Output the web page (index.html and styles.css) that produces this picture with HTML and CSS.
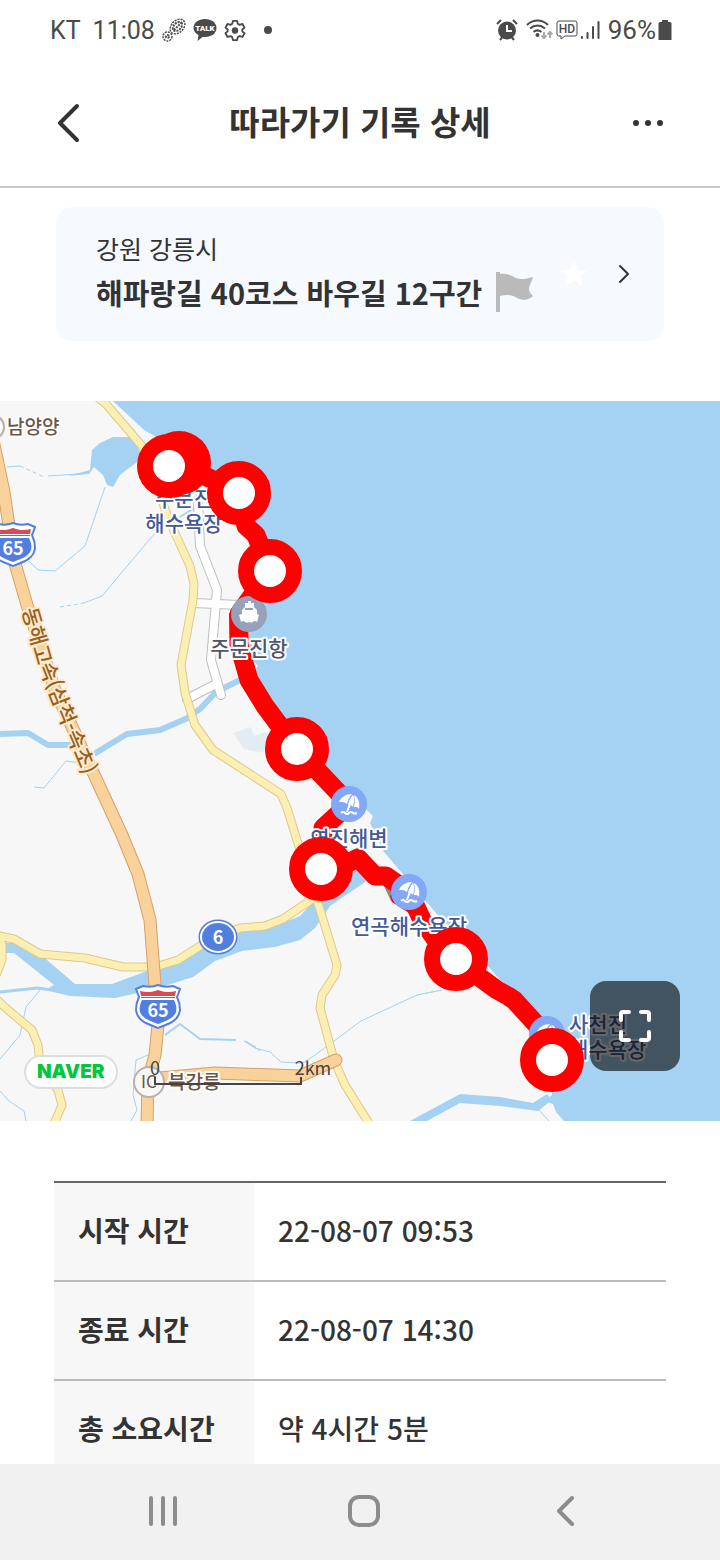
FILE: index.html
```html
<!DOCTYPE html>
<html lang="ko">
<head>
    <meta charset="UTF-8">
    <meta name="viewport" content="width=device-width, initial-scale=1.0">
    <title>따라가기 기록 상세</title>
    <link rel="stylesheet" href="styles.css">
</head>
<body>
    <!-- Status bar -->
    <div class="status-bar">
        <div class="status-left">
            <span class="carrier">KT</span>
            <span class="clock">11:08</span>
            <svg class="status-icon" width="24" height="24" viewBox="0 0 24 24" fill="none" stroke="#4a4a4a" stroke-dasharray="2 1">
                <ellipse cx="15.500" cy="8.500" rx="8.500" ry="6" transform="rotate(-45 15.500 8.500)" stroke-width="1.500"/>
                <ellipse cx="15.500" cy="8.500" rx="5.500" ry="3.500" transform="rotate(-45 15.500 8.500)" stroke-width="2"/>
                <path d="M12 12l7-7" stroke-width="2"/>
                <circle cx="5.500" cy="18.500" r="4.500" stroke-width="1.500"/>
                <circle cx="5.500" cy="18.500" r="1.500" stroke-width="2"/>
            </svg>
            <svg class="status-icon" width="24" height="24" viewBox="0 0 24 24">
                <path d="M12 1C5.500 1 .500 4.800.500 10c0 3 2 5.600 5 7.100L4.500 23l5.300-4.200c.7.100 1.400.200 2.200.200 6.500 0 11.500-3.800 11.500-9S18.500 1 12 1z" fill="#4a4a4a"/>
                <text class="talk" x="12" y="13" text-anchor="middle">TALK</text>
            </svg>
            <svg class="status-icon" width="22" height="24" viewBox="0 0 24 24" fill="none" stroke="#4a4a4a" stroke-width="2" stroke-linejoin="round">
                <path d="M9.700 2h4.600l.7 3.200 2 1.200 3.100-1 2.300 4-2.400 2.100v2l2.400 2.100-2.300 4-3.100-1-2 1.200-.7 3.200H9.700L9 19.800l-2-1.200-3.100 1-2.300-4L4 13.500v-2L1.600 9.400l2.300-4 3.100 1 2-1.200z"/>
                <circle cx="12" cy="12.500" r="3.500" fill="#4a4a4a" stroke="none"/>
            </svg>
            <span class="status-dot"></span>
        </div>
        <div class="status-right">
            <svg width="22" height="22" viewBox="0 0 22 22">
                <circle cx="11" cy="11.500" r="9" fill="#4a4a4a"/>
                <path d="M1 5l4-4M21 5l-4-4M4 21l2.500-3M18 21l-2.500-3" stroke="#4a4a4a" stroke-width="2"/>
                <path d="M11 6v6h5" fill="none" stroke="#fff" stroke-width="2"/>
            </svg>
            <svg class="wifi" width="28" height="22" viewBox="0 0 28 22" fill="none" stroke="#4a4a4a" stroke-width="2">
                <path d="M1 6c6-6 15-6 21 0M4 9.500c4.500-4 10.500-4 15 0M7.500 13c2.500-2 5.500-2 8 0"/>
                <circle cx="11.500" cy="16" r="2" fill="#4a4a4a" stroke="none"/>
                <path d="M18 13v6m-2.500-2.500L18 19l2.500-2.500M24 19v-6m-2.500 2.500L24 13l2.500 2.500" stroke="#aaa"/>
            </svg>
            <svg width="22" height="22" viewBox="0 0 22 22">
                <path d="M3 2h16a2 2 0 0 1 2 2v11a2 2 0 0 1-2 2H9l-4 3v-3H3a2 2 0 0 1-2-2V4a2 2 0 0 1 2-2z" fill="none" stroke="#4a4a4a"/>
                <text class="hd" x="11" y="14" text-anchor="middle">HD</text>
            </svg>
            <svg width="20" height="22" viewBox="0 0 20 22" stroke="#4a4a4a" stroke-width="2" stroke-linecap="round">
                <path d="M2 18v1M7.500 14v5M13 8v11M18.500 3v16"/>
            </svg>
            <span class="percent">96%</span>
            <svg width="14" height="22" viewBox="0 0 14 22">
                <path d="M4 1h6v2h2a1.500 1.500 0 0 1 1.500 1.500V21H.500V4.500A1.500 1.500 0 0 1 2 3h2z" fill="#4a4a4a"/>
            </svg>
        </div>
    </div>

    <header class="header">
        <button class="icon-button" type="button" aria-label="뒤로">
            <svg width="24" height="40" viewBox="0 0 24 40" fill="none" stroke="#333" stroke-width="4" stroke-linecap="round" stroke-linejoin="round">
                <path d="M21 3L4 20l17 17"/>
            </svg>
        </button>
        <h1 class="title">따라가기 기록 상세</h1>
        <button class="icon-button more" type="button" aria-label="더보기">
            <svg width="32" height="8" viewBox="0 0 32 8" fill="#333">
                <circle cx="4" cy="4" r="3"/>
                <circle cx="16" cy="4" r="3"/>
                <circle cx="28" cy="4" r="3"/>
            </svg>
        </button>
    </header>

    <main class="content">
        <a class="course" href="#course">
            <span class="course-text">
                <span class="region">강원 강릉시</span>
                <span class="course-name">
                    해파랑길 40코스 바우길 12구간
                    <svg class="flag" width="38" height="42" viewBox="0 0 38 42" fill="#bababa">
                        <path d="M0 1h4v40H0z"/>
                        <path d="M4 3c6-1 11 1 16 4 5 2 10 1 17-1-1 4-4 8-4 12 0 3 2 5 4 7-4 4-10 5-16 2-6-4-11-3-17-2z"/>
                    </svg>
                </span>
            </span>
            <svg class="star" width="28" height="28" viewBox="0 0 24 24" fill="#fff">
                <path d="M12 1l3.200 7.300 8 .7-6 5.300 1.800 7.700-7-4.100L5 22l1.800-7.700L.800 9l8-.700z"/>
            </svg>
            <svg width="12" height="20" viewBox="0 0 12 20" fill="none" stroke="#333" stroke-width="2" stroke-linecap="round" stroke-linejoin="round">
                <path d="M2 2l8 8-8 8"/>
            </svg>
        </a>

        <section class="map">
            <svg class="map-canvas" viewBox="0 401 720 720">
                <defs>
                    <symbol id="shield" viewBox="0 0 46 46">
                        <path d="M8 2c5 1 10 1 15-1 5 2 10 2 15 1l7 3c-1 3-2 6-3 8 2 4 3 8 3 13-1 10-9 13-22 18C10 39 2 36 1 26c0-5 1-9 3-13L1 5z" fill="#fff" stroke="#527fdf" stroke-width="2"/>
                        <path d="M7 16h32c2 4 3 8 2 12-2 6-10 9-18 12-8-3-16-6-18-12-1-4 0-8 2-12z" fill="#527fdf"/>
                        <path d="M6 13h34v1H6z" fill="#d84a54"/>
                        <path d="M5 7c7 2 13 1 18-1 5 2 11 3 18 1l-1 5H6z" fill="#d84a54"/>
                        <text class="road-number" x="23" y="33" text-anchor="middle">65</text>
                    </symbol>
                    <symbol id="beach" viewBox="0 0 36 36">
                        <circle cx="18" cy="18" r="18" fill="#82a8f7"/>
                        <path d="M8 16c2-5 7-8 13-8-3 3-4 6-5 10-2-2-5-2-8-2zM22 9c-3 3-4 6-5 10 2 0 4 0 5 2 1-4 2-8 0-12zM23 9c5 3 6 8 5 14-1-2-3-2-5-2 1-4 1-8 0-12z" fill="#fff"/>
                        <path d="M19 18l-3 8M10 27q2-2 4 0 2 2 4 0 2-2 4 0 2 1 4 0" fill="none" stroke="#fff" stroke-width="2"/>
                    </symbol>
                    <symbol id="point" viewBox="0 0 64 64">
                        <circle cx="32" cy="32" r="24" fill="#fff" stroke="#f00" stroke-width="16"/>
                    </symbol>
                    <path id="expressway-label" d="M22 610L36 659L57 713L86 782"/>
                </defs>

                <!-- Land and sea -->
                <rect y="401" width="720" height="720" fill="#f7f7f7"/>
                <path d="M113 401L130 417L144 430L160 439L205 485L240 520L262 575L250 620L248 655L258 666L252 674L262 700L297 749L345 795L368 811L373 816L370 823L384 852L408 880L440 918L470 945L500 980L520 996L548 1040L552 1095L545 1101L553 1104L556 1112L564 1121H720V401z" fill="#a5d2f3"/>
                <path d="M364 844L388 878M410 888L436 917" stroke="#f7f7f7" stroke-width="5"/>
                <path d="M233 733L251 727L254 736L265 732L280 738L273 751L258 752L244 749z" fill="#e4ecf3"/>

                <!-- Rivers -->
                <g fill="#a5d2f3">
                    <path d="M92 450L100 443L113 437L130 437L145 449L137 462L120 475L113 487L107 485L103 475L94 467L89 474L68 476L90 470z"/>
                    <path d="M4 943L15 942L40 954L75 984L112 984L150 970L200 950L235 931L285 922L300 916L314 901L356 870L375 862L368 880L330 906L315 928L300 940L275 947L242 951L215 961L193 977L155 989L115 998L70 996L45 990L54 985L14 953L4 953z"/>
                    <path d="M410 1121L460 1094L500 1097L533 1103L547 1094L552 1100L538 1111L500 1106L460 1103L427 1121z"/>
                </g>
                <g fill="none" stroke="#a5d2f3" stroke-linejoin="round">
                    <path d="M0 734L28 733L48 745L72 745M94 754L127 734L160 730L190 717" stroke-width="6"/>
                    <path d="M188 717L200 709L216 692L244 678" stroke-width="6"/>
                    <path d="M0 992L37 988L60 991" stroke-width="3"/>
                    <path d="M165 1035L180 1024L200 1039L236 1040M180 517L196 507" stroke-width="2"/>
                    <path d="M7 467L20 466M48 476L90 473M29 561L38 570L55 571L85 546L105 487M155 533L102 596L84 603M34 787L44 788L66 761L80 763M40 990L26 1007L20 1035L0 1059M0 1091L9 1101L24 1111L26 1121M148 1055L136 1060L133 1095L137 1110L131 1121M246 1041L260 1051M244 1041L256 1047M281 1062L300 1063L305 1062L322 1050L361 1021L417 995L442 990M281 1062L270 1052L255 1048L244 1041M538 1109L549 1121"/>
                </g>
                <path d="M20 466L44 477M60 607L84 603M417 995L442 990" stroke="#a5d2f3" stroke-dasharray="4 3"/>

                <!-- Local roads -->
                <g fill="none" stroke-linecap="round" stroke-linejoin="round">
                    <path d="M198 500L200 546L217 590L211 660L221 695M194 603L240 605M187 699L216 684" stroke="#bfbfbf" stroke-width="10"/>
                    <path d="M198 500L200 546L217 590L211 660L221 695M194 603L240 605M187 699L216 684" stroke="#fff" stroke-width="8"/>
                    <path d="M92 393L106 404L142 446L169 520L190 566L194 584L193 600L181 665L185 693L195 725L213 750L281 794L287 808L300 850L317 900L337 965L335 975L322 995L320 1008L334 1060L345 1085L370 1125M-5 935L14 939L40 954L85 958L123 967L155 967L178 960L205 943L240 928L265 926L283 919L314 898M-2 935L2 945L2 960L-4 975M-6 997L8 1010L32 1030L38 1045L40 1065L58 1090L62 1105L54 1124" stroke="#dfc88a" stroke-width="9"/>
                    <path d="M92 393L106 404L142 446L169 520L190 566L194 584L193 600L181 665L185 693L195 725L213 750L281 794L287 808L300 850L317 900L337 965L335 975L322 995L320 1008L334 1060L345 1085L370 1125M-5 935L14 939L40 954L85 958L123 967L155 967L178 960L205 943L240 928L265 926L283 919L314 898M-2 935L2 945L2 960L-4 975M-6 997L8 1010L32 1030L38 1045L40 1065L58 1090L62 1105L54 1124" stroke="#fcefb4" stroke-width="7"/>
                </g>

                <!-- Expressway -->
                <g fill="none" stroke-linecap="round" stroke-linejoin="round">
                    <path d="M-8 435L4 492L14 560L27 605L55 690L92 770L122 835L138 874L150 920L155 985L158 1025L155 1055L148 1080L147 1125M160 1078L215 1073L300 1076L336 1060" stroke="#d5a06c" stroke-width="13"/>
                    <path d="M-8 435L4 492L14 560L27 605L55 690L92 770L122 835L138 874L150 920L155 985L158 1025L155 1055L148 1080L147 1125M160 1078L215 1073L300 1076L336 1060" stroke="#f9d29b" stroke-width="11"/>
                </g>
                <text class="road-name"><textPath href="#expressway-label">동해고속(삼척-속초)</textPath></text>

                <use href="#shield" x="-10" y="522" width="46" height="46"/>
                <use href="#shield" x="135" y="984" width="46" height="46"/>
                <ellipse cx="218" cy="937" rx="18" ry="16" fill="#527fdf" stroke="#527fdf" stroke-width="3"/>
                <ellipse cx="218" cy="937" rx="17" ry="15" fill="#527fdf" stroke="#fff" stroke-width="2"/>
                <text class="road-number" x="218" y="944" text-anchor="middle">6</text>

                <circle cx="-8" cy="427" r="12" fill="#fff" stroke="#bbb0ac" stroke-width="2"/>
                <circle cx="149" cy="1082" r="15" fill="#f7f7f7" stroke="#bbb0ac" stroke-width="2"/>
                <text class="junction" x="149" y="1088" text-anchor="middle">IC</text>
                <text class="place town" x="7" y="434">남양양</text>
                <text class="place town" x="168" y="1089">북강릉</text>

                <!-- Walked route -->
                <path d="M384 886L391 901L404 910L400 890z" fill="#888"/>
                <path d="M179 463L239 493L246 526L256 535L270 571L239 614L239 645L249 680L265 706L297 749L335 789L349 804L323 828L321 869L344 865L358 858L375 876L386 876L409 892L422 920L434 937L456 959L482 979L497 990L508 996L514 1000L546 1035L552 1060" fill="none" stroke="#f00" stroke-width="19" stroke-linejoin="round"/>
                <path d="M229 613l12 6v28h-11zM390 895l30 5 8 25-36-23z" fill="#f00"/>

                <!-- Places -->
                <circle cx="249" cy="614" r="18" fill="#98a1bb"/>
                <path d="M245 607v-4h3v-2h3v2h3v4l3 3v4l2 1-2 7q-2-2-4 0-2 1-4 0-2 1-4 0-2-2-4 0l-2-7 3-1v-4z" fill="#fff"/>
                <path d="M245 609h8" stroke="#98a1bb" stroke-width="2"/>
                <use href="#beach" x="331" y="786" width="36" height="36"/>
                <use href="#beach" x="391" y="874" width="36" height="36"/>
                <use href="#beach" x="529" y="1016" width="36" height="36"/>
                <text class="place" x="184" y="506" text-anchor="middle">주문진</text>
                <text class="place" x="184" y="531" text-anchor="middle">해수욕장</text>
                <text class="place port" x="249" y="656" text-anchor="middle">주문진항</text>
                <text class="place" x="349" y="846" text-anchor="middle">연진해변</text>
                <text class="place" x="409" y="934" text-anchor="middle">연곡해수욕장</text>
                <text class="place" x="569" y="1032">사천진</text>
                <text class="place" x="569" y="1057">해수욕장</text>

                <!-- Checkpoints -->
                <circle cx="179" cy="463" r="32" fill="#f00"/>
                <use href="#point" x="137" y="434" width="64" height="64"/>
                <use href="#point" x="207" y="461" width="64" height="64"/>
                <use href="#point" x="238" y="539" width="64" height="64"/>
                <use href="#point" x="265" y="717" width="64" height="64"/>
                <use href="#point" x="289" y="837" width="64" height="64"/>
                <use href="#point" x="424" y="927" width="64" height="64"/>
                <use href="#point" x="520" y="1028" width="64" height="64"/>

                <!-- Scale -->
                <path d="M155 1077v7h146v-7" fill="none" stroke="#444" stroke-width="2"/>
                <text class="scale" x="155" y="1075" text-anchor="middle">0</text>
                <text class="scale" x="313" y="1075" text-anchor="middle">2km</text>
            </svg>
            <a class="naver" href="#naver">NAVER</a>
            <button class="expand" type="button" aria-label="지도 크게 보기">
                <svg width="34" height="34" viewBox="0 0 34 34" fill="none" stroke="#fff" stroke-width="4" stroke-linecap="round" stroke-linejoin="round">
                    <path d="M3 11V5q0-2 2-2h6M23 3h6q2 0 2 2v6M31 23v6q0 2-2 2h-6M11 31H5q-2 0-2-2v-6"/>
                </svg>
            </button>
        </section>

        <table class="record">
            <tr>
                <th scope="row">시작 시간</th>
                <td>22-08-07 09:53</td>
            </tr>
            <tr>
                <th scope="row">종료 시간</th>
                <td>22-08-07 14:30</td>
            </tr>
            <tr>
                <th scope="row">총 소요시간</th>
                <td>약 4시간 5분</td>
            </tr>
        </table>
    </main>

    <nav class="nav-bar">
        <button type="button" aria-label="최근 앱">
            <svg width="32" height="32" viewBox="0 0 32 32" stroke="#8c8c8c" stroke-width="4" stroke-linecap="round">
                <path d="M4 3v26M16 3v26M28 3v26"/>
            </svg>
        </button>
        <button type="button" aria-label="홈">
            <svg width="32" height="32" viewBox="0 0 32 32" fill="none" stroke="#8c8c8c" stroke-width="4">
                <rect x="2" y="2" width="28" height="28" rx="9"/>
            </svg>
        </button>
        <button type="button" aria-label="이전">
            <svg width="18" height="32" viewBox="0 0 18 32" fill="none" stroke="#8c8c8c" stroke-width="4" stroke-linecap="round" stroke-linejoin="round">
                <path d="M16 3L3 16l13 13"/>
            </svg>
        </button>
    </nav>
</body>
</html>
```

FILE: styles.css
```css
* {
    box-sizing: border-box;
}

body {
    font-family: "Noto Sans CJK KR", "Noto Sans", sans-serif;
    background-color: #fff;
    color: #333;
    margin: 0;
    height: 100vh;
    display: flex;
    flex-direction: column;
}

svg {
    display: block;
    flex-shrink: 0;
}

button {
    background: none;
    border: none;
    padding: 0;
    cursor: pointer;
}

/* Status bar */
.status-bar {
    display: flex;
    justify-content: space-between;
    align-items: center;
    height: 60px;
    padding: 0 48px 0 50px;
    font-family: Roboto, sans-serif;
    font-size: 25px;
    color: #4a4a4a;
}

.status-left,
.status-right {
    display: flex;
    align-items: center;
}

.carrier {
    margin-right: 12px;
}

.status-icon {
    margin-left: 7px;
}

.status-dot {
    width: 8px;
    height: 8px;
    margin-left: 18px;
    border-radius: 50%;
    background-color: #4a4a4a;
}

.talk {
    font-size: 8px;
    font-weight: 900;
    fill: #fff;
}

.wifi {
    margin-left: 6px;
}

.hd {
    font-size: 12px;
    font-weight: 500;
    fill: #4a4a4a;
}

.status-right {
    gap: 2px;
}

.percent {
    margin-left: 6px;
    font-size: 26px;
}

/* Header */
.header {
    display: flex;
    justify-content: space-between;
    align-items: center;
    height: 128px;
    padding: 0 56px;
    border-bottom: 2px solid #c9c9c9;
}

.icon-button {
    display: flex;
    align-items: center;
    width: 36px;
    height: 48px;
}

.more {
    justify-content: flex-end;
}

.title {
    margin: 0;
    padding-bottom: 4px;
    font-size: 33px;
    font-weight: 700;
}

.content {
    flex: 1;
    min-height: 0;
    overflow-y: auto;
    scrollbar-width: none;
}

/* Course card */
.course {
    display: flex;
    align-items: center;
    margin: 19px 56px 60px;
    padding: 23px 34px 23px 40px;
    border-radius: 16px;
    background-color: #f6faff;
    color: #333;
    text-decoration: none;
}

.course-text {
    flex: 1;
}

.region {
    display: block;
    font-size: 25px;
    line-height: 36px;
}

.course-name {
    display: flex;
    align-items: center;
    gap: 14px;
    font-size: 29px;
    font-weight: 700;
    line-height: 52px;
    white-space: nowrap;
}

.star {
    margin-right: 30px;
}

/* Map */
.map {
    position: relative;
}

.map-canvas {
    width: 100%;
}

.place {
    font-size: 21px;
    font-weight: 500;
    fill: #43599a;
    stroke: #fff;
    stroke-width: 4px;
    stroke-linejoin: round;
    paint-order: stroke;
}

.town {
    font-size: 19px;
    fill: #6b5548;
}

.port {
    fill: #50566a;
}

.road-name {
    font-size: 21px;
    font-weight: 500;
    fill: #99601c;
    stroke: #fdebd0;
    stroke-width: 4px;
    stroke-linejoin: round;
    paint-order: stroke;
}

.road-number {
    font-size: 18px;
    font-weight: 700;
    fill: #fff;
}

.junction {
    font-size: 17px;
    fill: #6b5548;
}

.scale {
    font-size: 18px;
    fill: #444;
}

.naver {
    position: absolute;
    left: 24px;
    bottom: 32px;
    padding: 0 11px;
    border: 2px solid #dedede;
    border-radius: 17px;
    background-color: #fff;
    color: #00c73c;
    font-family: Inter, sans-serif;
    font-size: 19px;
    font-weight: 900;
    line-height: 30px;
    text-decoration: none;
}

.expand {
    position: absolute;
    right: 40px;
    bottom: 50px;
    display: flex;
    justify-content: center;
    align-items: center;
    width: 90px;
    height: 90px;
    border-radius: 16px;
    background-color: rgba(0, 0, 0, 0.6);
}

/* Record table */
.record {
    width: calc(100% - 108px);
    margin: 60px 54px;
    border-collapse: separate;
    border-spacing: 0;
    border-top: 2px solid #666;
    font-size: 28px;
    line-height: 42px;
    text-align: left;
}

.record th,
.record td {
    padding: 26px 24px 29px;
    border-bottom: 2px solid #bbb;
    font-weight: 500;
}

.record th {
    width: 200px;
    background-color: #f7f7f7;
    font-weight: 700;
}

/* Navigation bar */
.nav-bar {
    display: grid;
    grid-template-columns: repeat(3, 1fr);
    height: 96px;
    padding: 0 54px 2px 62px;
    background-color: #f1f1f1;
}

.nav-bar button {
    display: flex;
    justify-content: center;
    align-items: center;
}
```
